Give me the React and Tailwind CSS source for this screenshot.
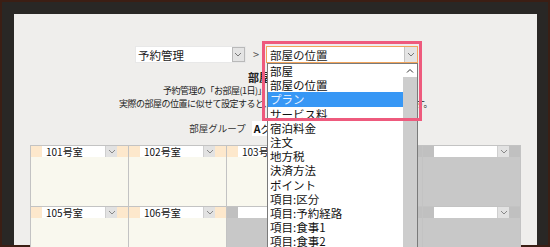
import React from "react";

const ITEMS = [
  "部屋",
  "部屋の位置",
  "プラン",
  "サービス料",
  "宿泊料金",
  "注文",
  "地方税",
  "決済方法",
  "ポイント",
  "項目:区分",
  "項目:予約経路",
  "項目:食事1",
  "項目:食事2",
];

const ROWS = [
  ["101号室", "102号室", "103号室", null, null],
  ["105号室", "106号室", null, null, null],
];

function Chevron({ up }) {
  return (
    <svg width="8" height="5" viewBox="0 0 8 5">
      <polyline
        points={up ? "1,4.5 4,1.5 7,4.5" : "1,1 4,4 7,1"}
        fill="none"
        stroke="currentColor"
        strokeWidth="1"
      />
    </svg>
  );
}

function Cell({ name }) {
  const empty = !name;
  return (
    <div className={`border-r border-b border-[#c3c3c3] ${empty ? "bg-[#c8c8c8]" : "bg-[#f9f8ee]"}`}>
      <div className="flex h-[11px]">
        <span className={`w-[11px] ${empty ? "bg-[#c0c0c0]" : "bg-[#fde8cc]"}`} />
        <div className="flex flex-1 bg-white">
          <span className="flex-1 pl-[4px] text-[10px] leading-[11px] text-[#111] whitespace-nowrap">
            {name}
          </span>
          <span className="w-[12px] flex items-center justify-center bg-[#e2e2e2] border-l border-[#cfcfcf] text-[#888]">
            <Chevron />
          </span>
        </div>
        <span className={`w-[11px] ${empty ? "bg-[#c0c0c0]" : "bg-[#fde8cc]"}`} />
      </div>
      <div className="h-[49px]" />
    </div>
  );
}

export default function App() {
  return (
    <div className="w-[550px] h-[247px] overflow-hidden bg-[#3b1e14] p-[2px] font-['Noto_Sans_CJK_JP',sans-serif]">
      <div className="h-full bg-[#292725] pl-[12px] pt-[12px] pr-[11px]">
        <div className="h-full bg-[#efeeec] flex flex-col pt-[32px]">
          {/* breadcrumb selects */}
          <div className="relative z-20 flex justify-center items-center pl-[2px]">
            <div className="flex w-[111px] h-[17px] bg-white border border-[#e8e8e8]">
              <span className="flex-1 pl-[2px] text-[11.5px] leading-[16px] text-[#222]">予約管理</span>
              <span className="w-[13px] flex items-center justify-center bg-[#e4e4e4] border border-[#b9b9b9] text-[#777]">
                <Chevron />
              </span>
            </div>
            <span className="mx-[7px] text-[11px] text-[#555] leading-[17px]">&gt;</span>
            <div className="relative w-[152px] h-[17px]">
              <div className="flex h-full bg-white border border-[#f2a55c]">
                <span className="flex-1 pl-[3px] text-[11.5px] leading-[16px] text-[#222]">部屋の位置</span>
                <span className="w-[13px] flex items-center justify-center bg-[#e4e4e4] border-l border-[#c4c4c4] text-[#777]">
                  <Chevron />
                </span>
              </div>
              {/* open list */}
              <div className="absolute left-[1px] top-full w-[151px] h-[186px] flex bg-white border border-[#7a7a7a] border-b-0">
                <ul className="flex-1 overflow-hidden">
                  {ITEMS.map((item) => {
                    const active = item === "プラン";
                    return (
                      <li
                        key={item}
                        className={`h-[14.2px] pl-[2px] text-[11.5px] leading-[14.2px] whitespace-nowrap ${
                          active ? "bg-[#3797f5] text-[#e9f2ff]" : "text-[#111]"
                        }`}
                      >
                        {item}
                      </li>
                    );
                  })}
                </ul>
                <div className="w-[14px] flex flex-col">
                  <span className="h-[13px] flex items-center justify-center bg-white text-[#333]">
                    <Chevron up />
                  </span>
                  <span className="flex-1 bg-[#cdcdcd]" />
                </div>
              </div>
              {/* annotation frame */}
              <div className="absolute left-[-4px] top-[-5px] w-[160px] h-[80px] border-[3px] border-[#ee5a7d] pointer-events-none" />
            </div>
          </div>

          <h2 className="mt-[7px] text-center text-[11px] leading-[14px] font-bold text-[#222]">部屋の位置</h2>
          <div className="text-center text-[9px] leading-[13px] tracking-[-0.5px] text-[#222]">
            <p>予約管理の「お部屋(1日)」、部屋割り画面に反映されます。</p>
            <p>実際の部屋の位置に似せて設定すると、部屋の空き状況が把握しやすくなります。</p>
          </div>

          <div className="mt-[11px] flex justify-center items-center gap-[6px] h-[16px]">
            <span className="text-[9.5px] text-[#333]">部屋グループ</span>
            <span className="w-[110px] h-[15px] bg-white pl-[2px] text-[10.5px] leading-[15px] text-[#111]">
              <b className="font-semibold">A</b>グループ
            </span>
          </div>

          <div className="mt-[9px] ml-[16px] w-[491px] grid grid-cols-5 border-l border-t border-[#c3c3c3]">
            {ROWS.flat().map((name, i) => (
              <Cell key={i} name={name} />
            ))}
          </div>
        </div>
      </div>
    </div>
  );
}
